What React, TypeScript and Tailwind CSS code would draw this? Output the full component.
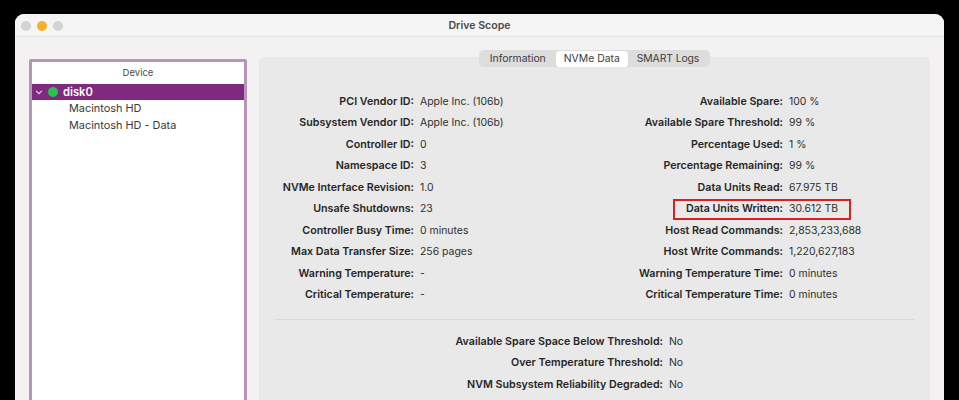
const left: [string, string][] = [
  ["PCI Vendor ID:", "Apple Inc. (106b)"],
  ["Subsystem Vendor ID:", "Apple Inc. (106b)"],
  ["Controller ID:", "0"],
  ["Namespace ID:", "3"],
  ["NVMe Interface Revision:", "1.0"],
  ["Unsafe Shutdowns:", "23"],
  ["Controller Busy Time:", "0 minutes"],
  ["Max Data Transfer Size:", "256 pages"],
  ["Warning Temperature:", "-"],
  ["Critical Temperature:", "-"],
];
const right: [string, string][] = [
  ["Available Spare:", "100 %"],
  ["Available Spare Threshold:", "99 %"],
  ["Percentage Used:", "1 %"],
  ["Percentage Remaining:", "99 %"],
  ["Data Units Read:", "67.975 TB"],
  ["Data Units Written:", "30.612 TB"],
  ["Host Read Commands:", "2,853,233,688"],
  ["Host Write Commands:", "1,220,627,183"],
  ["Warning Temperature Time:", "0 minutes"],
  ["Critical Temperature Time:", "0 minutes"],
];
const bottom: [string, string][] = [
  ["Available Spare Space Below Threshold:", "No"],
  ["Over Temperature Threshold:", "No"],
  ["NVM Subsystem Reliability Degraded:", "No"],
];

function Row({ label, value, labelW, boxed }: { label: string; value: string; labelW: string; boxed?: boolean }) {
  return (
    <div className="relative flex h-[21.5px] items-center gap-[6px] text-[#262626]">
      <div className={`${labelW} shrink-0 text-right text-[10.7px] font-semibold`}>{label}</div>
      <div className="whitespace-nowrap text-[10.45px] text-[#303030]">{value}</div>
      {boxed && <div className="absolute left-[45px] top-0 h-[21px] w-[178px] border-2 border-[#d9201f]" />}
    </div>
  );
}

export default function App() {
  return (
    <div className="h-[400px] w-[959px] overflow-hidden bg-black pl-[15px] pt-[14px] font-['Inter','Liberation_Sans',sans-serif]">
      <div className="h-[400px] w-[929px] rounded-t-[9px] bg-[#f3f1f1]">
        <div className="relative flex h-[23px] items-center justify-center rounded-t-[9px] border-b border-[#e6e5e5] bg-[#f6f5f5]">
          <div className="absolute left-[6px] top-[7px] flex gap-[6px]">
            <div className="h-[10px] w-[10px] rounded-full bg-[#d5d4d4]" />
            <div className="h-[10px] w-[10px] rounded-full bg-[#f5b025]" />
            <div className="h-[10px] w-[10px] rounded-full bg-[#d5d4d4]" />
          </div>
          <div className="pt-[1px] text-[10.6px] font-semibold text-[#4a4a4a]">Drive Scope</div>
        </div>
        <div className="flex gap-[12px] pl-[14px] pt-[20px]">
          <div className="mt-[2px] h-[400px] w-[218px] shrink-0 rounded-t-[2px] border-[3px] border-[#b795bb] bg-white">
            <div className="flex h-[22px] items-center justify-center text-[9.5px] text-[#4c4c4c]">Device</div>
            <div className="flex h-[16px] items-center bg-[#7f2a7e] pl-[3px] text-white">
              <svg width="8" height="8" viewBox="0 0 8 8" fill="none" stroke="#e8d5e8" strokeWidth="1.2"><path d="M1.2 2.8 4 5.6l2.8-2.8" /></svg>
              <div className="ml-[5px] h-[10px] w-[10px] rounded-full bg-[#27c54a]" />
              <div className="ml-[5px] text-[11.2px] font-semibold">disk0</div>
            </div>
            <div className="pl-[37px] text-[10.9px] leading-[17px] text-[#3a3a3a]">
              <div>Macintosh HD</div>
              <div>Macintosh HD - Data</div>
            </div>
          </div>
          <div className="h-[400px] w-[671px] shrink-0 rounded-t-[5px] bg-[#e8e9e8]">
            <div className="-mt-[7px] flex justify-center">
              <div className="flex h-[17px] items-center rounded-[5px] bg-[#dddddc] text-[10.4px] text-[#3c3c3c]">
                <div className="pl-[11px] pr-[10px]">Information</div>
                <div className="rounded-[4px] bg-white px-[8px] leading-[16px]">NVMe Data</div>
                <div className="pl-[9px] pr-[11px] tracking-[-0.01em]">SMART Logs</div>
              </div>
            </div>
            <div className="mt-[24px] flex">
              <div className="w-[369px]">
                {left.map(([l, v]) => <Row key={l} label={l} value={v} labelW="w-[155px]" />)}
              </div>
              <div>
                {right.map(([l, v]) => (
                  <Row key={l} label={l} value={v} labelW="w-[155px]" boxed={l === "Data Units Written:"} />
                ))}
              </div>
            </div>
            <div className="mx-[16px] mt-[13px] border-t border-[#d8d8d8]" />
            <div className="mt-[11px] pl-[150px]">
              {bottom.map(([l, v]) => <Row key={l} label={l} value={v} labelW="w-[254px]" />)}
            </div>
          </div>
        </div>
      </div>
    </div>
  );
}
